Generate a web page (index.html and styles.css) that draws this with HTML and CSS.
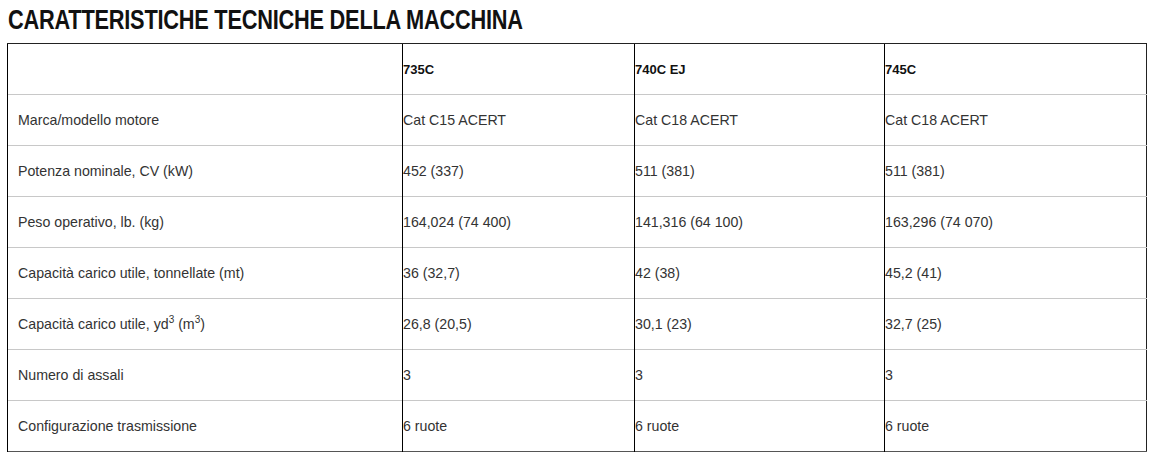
FILE: index.html
```html
<!DOCTYPE html>
<html>
<head>
<meta charset="utf-8">
<link rel="stylesheet" href="styles.css">
</head>
<body>
<div class="title-wrap"><h1 class="title">CARATTERISTICHE TECNICHE DELLA MACCHINA</h1></div>
<table class="specs">
  <colgroup>
    <col class="c1"><col class="c2"><col class="c3"><col class="c4">
  </colgroup>
  <tr class="head"><td class="label"></td><td>735C</td><td>740C EJ</td><td>745C</td></tr>
  <tr><td class="label">Marca/modello motore</td><td>Cat C15 ACERT</td><td>Cat C18 ACERT</td><td>Cat C18 ACERT</td></tr>
  <tr><td class="label">Potenza nominale, CV (kW)</td><td>452 (337)</td><td>511 (381)</td><td>511 (381)</td></tr>
  <tr><td class="label">Peso operativo, lb. (kg)</td><td>164,024 (74 400)</td><td>141,316 (64 100)</td><td>163,296 (74 070)</td></tr>
  <tr><td class="label">Capacità carico utile, tonnellate (mt)</td><td>36 (32,7)</td><td>42 (38)</td><td>45,2 (41)</td></tr>
  <tr><td class="label">Capacità carico utile, yd<sup>3</sup> (m<sup>3</sup>)</td><td>26,8 (20,5)</td><td>30,1 (23)</td><td>32,7 (25)</td></tr>
  <tr><td class="label">Numero di assali</td><td>3</td><td>3</td><td>3</td></tr>
  <tr><td class="label">Configurazione trasmissione</td><td>6 ruote</td><td>6 ruote</td><td>6 ruote</td></tr>
</table>
</body>
</html>
```
FILE: styles.css
```css
html, body { margin: 0; padding: 0; background: #fff; }
body { padding: 0 0 0 7px; font-family: "Liberation Sans", Arial, sans-serif; color: #222; }
.title-wrap {
  height: 43px;
  padding-top: 5px;
  box-sizing: border-box;
}
.title {
  display: inline-block;
  margin: 0 0 0 1px;
  font-family: "Liberation Sans", Arial, sans-serif;
  font-size: 27px;
  line-height: 30px;
  font-weight: bold;
  color: #111;
  letter-spacing: -0.3px;
  white-space: nowrap;
  transform: scaleX(0.807);
  transform-origin: left center;
}
.specs {
  border-collapse: collapse;
  width: 1139px;
  table-layout: fixed;
  border: 1px solid #222;
  border-bottom-color: #555;
  font-size: 14.2px;
}
.c1 { width: 395px; }
.c2 { width: 232px; }
.c3 { width: 250px; }
.c4 { width: 262px; }
.specs td {
  height: 50px;
  padding: 0;
  border-left: 1px solid #000;
  border-top: 1px solid #c8c8c8;
  vertical-align: middle;
  color: #333;
}
.specs td.label { padding-left: 10px; }
.specs tr.head td { font-weight: bold; font-size: 13px; color: #111; border-top: 1px solid #222; }
sup { font-size: 10px; line-height: 0; vertical-align: 6px; }
```
